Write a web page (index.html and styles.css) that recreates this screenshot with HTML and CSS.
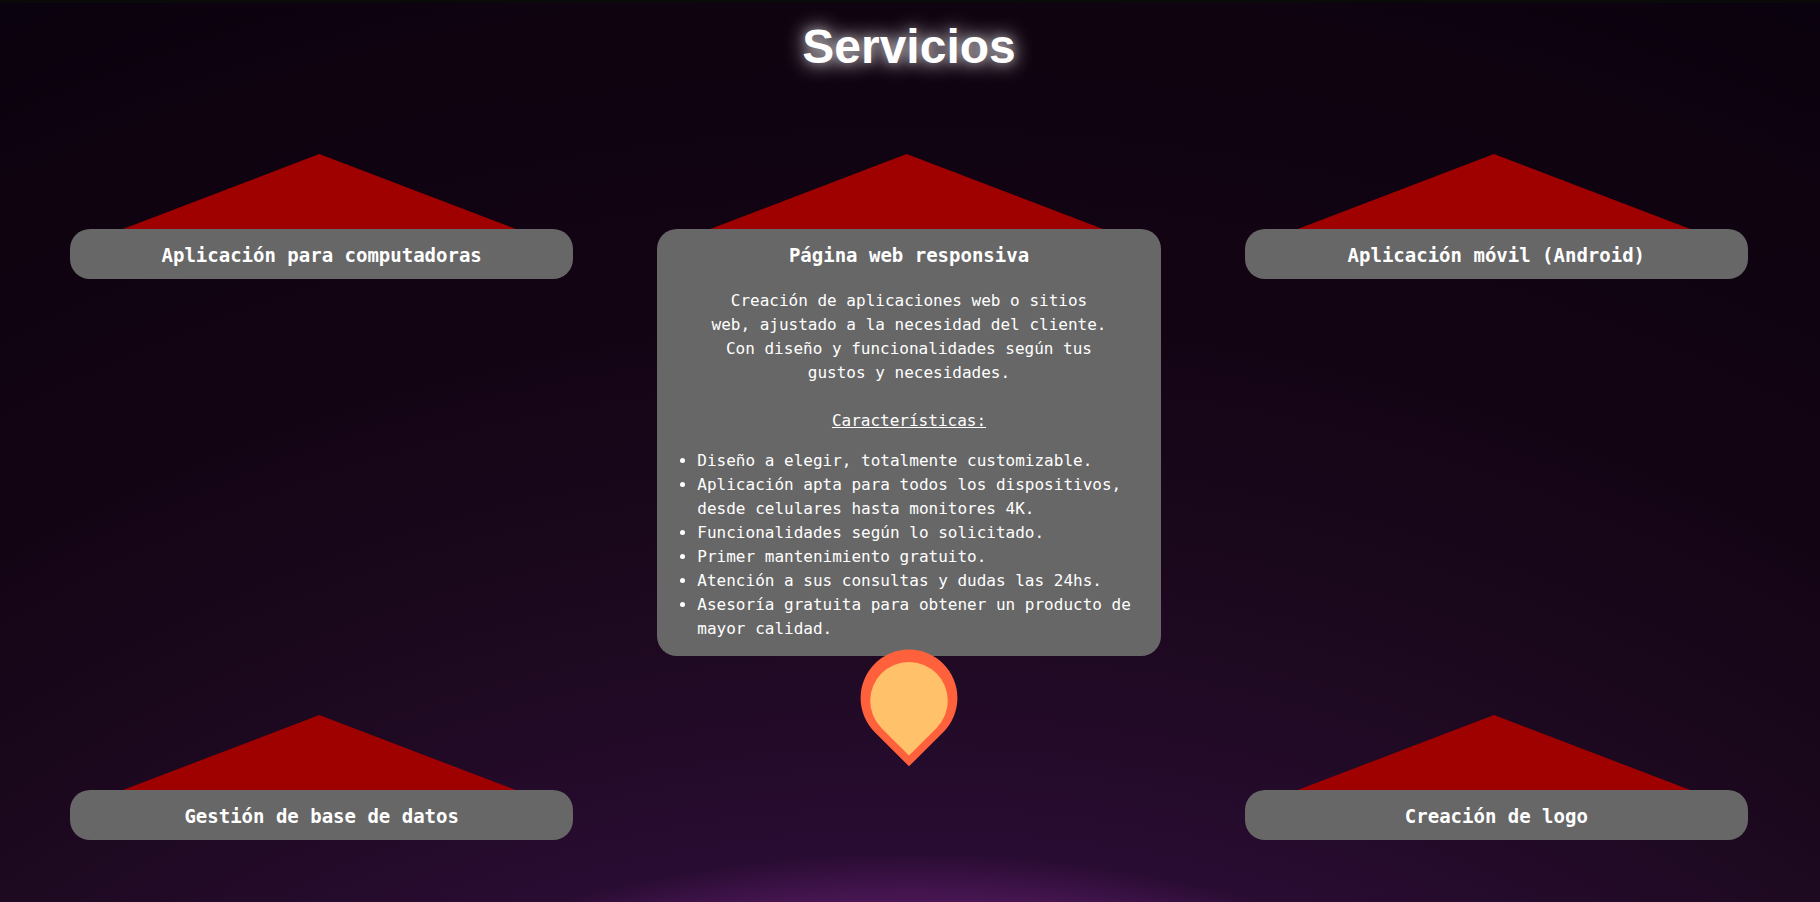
FILE: index.html
```html
<!DOCTYPE html>
<html lang="es">
<head>
  <meta charset="utf-8">
  <meta name="viewport" content="width=device-width, initial-scale=1">
  <title>Servicios</title>
  <link rel="stylesheet" href="styles.css">
</head>
<body>
  <section class="services">
    <h2 class="services-title">Servicios</h2>
    <div class="services-grid">
      <article class="rocket">
        <div class="rocket-nose"></div>
        <div class="rocket-body">
          <h3 class="rocket-title">Aplicación para computadoras</h3>
        </div>
      </article>

      <article class="rocket">
        <div class="rocket-nose"></div>
        <div class="rocket-body">
          <h3 class="rocket-title">Página web responsiva</h3>
          <div class="rocket-details">
            <p class="rocket-text">Creación de aplicaciones web o sitios web, ajustado a la necesidad del cliente. Con diseño y funcionalidades según tus gustos y necesidades.</p>
            <p class="rocket-subtitle">Características:</p>
            <ul class="rocket-list">
              <li>Diseño a elegir, totalmente customizable.</li>
              <li>Aplicación apta para todos los dispositivos, desde celulares hasta monitores 4K.</li>
              <li>Funcionalidades según lo solicitado.</li>
              <li>Primer mantenimiento gratuito.</li>
              <li>Atención a sus consultas y dudas las 24hs.</li>
              <li>Asesoría gratuita para obtener un producto de mayor calidad.</li>
            </ul>
          </div>
          <svg class="rocket-flame" viewBox="0 0 98 118" aria-hidden="true">
            <path fill="#ff613c" d="M49 117.3 14.8 83.2A48.4 48.4 0 1 1 83.2 83.2Z"/>
            <path fill="#ffc26b" d="M49 106.6 21.6 79.2A38.8 38.8 0 1 1 76.4 79.2Z"/>
          </svg>
        </div>
      </article>

      <article class="rocket">
        <div class="rocket-nose"></div>
        <div class="rocket-body">
          <h3 class="rocket-title">Aplicación móvil (Android)</h3>
        </div>
      </article>

      <article class="rocket">
        <div class="rocket-nose"></div>
        <div class="rocket-body">
          <h3 class="rocket-title">Gestión de base de datos</h3>
        </div>
      </article>

      <article class="rocket rocket-last">
        <div class="rocket-nose"></div>
        <div class="rocket-body">
          <h3 class="rocket-title">Creación de logo</h3>
        </div>
      </article>
    </div>
  </section>
</body>
</html>
```
FILE: styles.css
```css
* {
  box-sizing: border-box;
}

body {
  margin: 0;
  padding: 3px 0 1px;
  background: #0a0a0a;
  color: #fff;
  font-family: "DejaVu Sans Mono", "Liberation Mono", monospace;
  font-size: 16px;
  line-height: 24px;
}

.services {
  padding: 12px 72px 62px 70px;
  background: radial-gradient(circle at 50% 2160px,
    #4a1656 1255px,
    #451550 1268px,
    #290c32 1310px,
    #1d0920 1550px,
    #130414 1850px,
    #0f0310 2150px,
    #0a020e 2350px);
}

.services-title {
  margin: 0 0 75px;
  font-family: "Liberation Sans", Arial, sans-serif;
  font-size: 48px;
  line-height: 64px;
  text-align: center;
  text-shadow: 0 0 10px rgba(255, 255, 255, 0.3), 0 0 20px #fff;
}

.services-grid {
  display: grid;
  grid-template-columns: repeat(3, 1fr);
  gap: 59px 84px;
  align-items: start;
}

.rocket-last {
  grid-column: 3;
}

.rocket-nose {
  width: 78%;
  height: 75px;
  margin-left: 53px;
  background: #9f0000;
  clip-path: polygon(50% 0, 100% 100%, 0 100%);
}

.rocket-body {
  position: relative;
  padding: 14px 0 12px;
  border-radius: 20px;
  background: #676767;
}

.rocket-title {
  margin: 0;
  font-size: 19px;
  line-height: 24px;
  text-align: center;
}

.rocket-details {
  padding: 22px 0 3px;
}

.rocket-text {
  width: 80%;
  margin: 0 auto 24px;
  text-align: center;
}

.rocket-subtitle {
  margin: 0;
  text-align: center;
  text-decoration: underline;
}

.rocket-list {
  margin: 16px 0 0;
  padding: 0 0 0 40px;
}

.rocket-flame {
  position: absolute;
  top: calc(100% - 7px);
  left: 50%;
  width: 98px;
  transform: translateX(-50%);
}
```
